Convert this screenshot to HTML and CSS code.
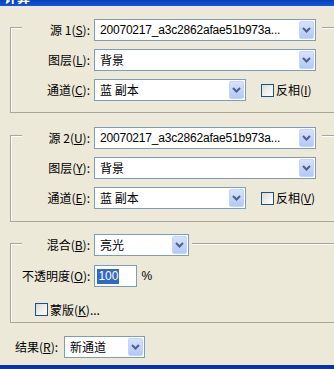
FILE: index.html
```html
<!DOCTYPE html>
<html lang="zh-CN">
<head>
  <meta charset="UTF-8">
  <meta name="viewport" content="width=device-width, initial-scale=1.0">
  <title>计算</title>
  <link rel="stylesheet" href="styles.css">
</head>
<body>
  <div class="titlebar"><span>计算</span></div>

  <div class="dialog">
    <!-- source 1 -->
    <section class="group g1">
      <div class="row head">
        <label class="lbl">源 1(<u>S</u>):</label>
        <div class="select wide"><span class="val latin">20070217_a3c2862afae51b973a...</span><span class="arrow"><svg width="13" height="10" viewBox="0 0 13 10"><polyline points="3,3 6.5,6.5 10,3" fill="none" stroke="#4d6185" stroke-width="2"/></svg></span></div>
      </div>
      <div class="row">
        <label class="lbl">图层(<u>L</u>):</label>
        <div class="select wide"><span class="val">背景</span><span class="arrow"><svg width="13" height="10" viewBox="0 0 13 10"><polyline points="3,3 6.5,6.5 10,3" fill="none" stroke="#4d6185" stroke-width="2"/></svg></span></div>
      </div>
      <div class="row">
        <label class="lbl">通道(<u>C</u>):</label>
        <div class="select mid"><span class="val">蓝 副本</span><span class="arrow"><svg width="13" height="10" viewBox="0 0 13 10"><polyline points="3,3 6.5,6.5 10,3" fill="none" stroke="#4d6185" stroke-width="2"/></svg></span></div>
        <span class="check invert"></span><span class="check-lbl">反相(<u>I</u>)</span>
      </div>
    </section>

    <!-- source 2 -->
    <section class="group g2">
      <div class="row head">
        <label class="lbl">源 2(<u>U</u>):</label>
        <div class="select wide"><span class="val latin">20070217_a3c2862afae51b973a...</span><span class="arrow"><svg width="13" height="10" viewBox="0 0 13 10"><polyline points="3,3 6.5,6.5 10,3" fill="none" stroke="#4d6185" stroke-width="2"/></svg></span></div>
      </div>
      <div class="row">
        <label class="lbl">图层(<u>Y</u>):</label>
        <div class="select wide"><span class="val">背景</span><span class="arrow"><svg width="13" height="10" viewBox="0 0 13 10"><polyline points="3,3 6.5,6.5 10,3" fill="none" stroke="#4d6185" stroke-width="2"/></svg></span></div>
      </div>
      <div class="row">
        <label class="lbl">通道(<u>E</u>):</label>
        <div class="select mid"><span class="val">蓝 副本</span><span class="arrow"><svg width="13" height="10" viewBox="0 0 13 10"><polyline points="3,3 6.5,6.5 10,3" fill="none" stroke="#4d6185" stroke-width="2"/></svg></span></div>
        <span class="check invert"></span><span class="check-lbl">反相(<u>V</u>)</span>
      </div>
    </section>

    <!-- blending -->
    <section class="group g3">
      <div class="row head short">
        <label class="lbl">混合(<u>B</u>):</label>
        <div class="select small"><span class="val">亮光</span><span class="arrow"><svg width="13" height="10" viewBox="0 0 13 10"><polyline points="3,3 6.5,6.5 10,3" fill="none" stroke="#4d6185" stroke-width="2"/></svg></span></div>
      </div>
      <div class="row opacity">
        <label class="lbl">不透明度(<u>O</u>):</label>
        <div class="input"><span class="sel latin">100</span></div>
        <span class="pct latin">%</span>
      </div>
      <div class="row mask">
        <span class="check"></span><span class="check-lbl">蒙版(<u>K</u>)...</span>
      </div>
    </section>

    <div class="row result">
      <label class="lbl">结果(<u>R</u>):</label>
      <div class="select res"><span class="val">新通道</span><span class="arrow"><svg width="13" height="10" viewBox="0 0 13 10"><polyline points="3,3 6.5,6.5 10,3" fill="none" stroke="#4d6185" stroke-width="2"/></svg></span></div>
    </div>
  </div>

  <div class="bottombar"></div>
</body>
</html>
```

FILE: styles.css
```css
* {
  margin: 0;
  padding: 0;
  box-sizing: border-box;
}

html, body {
  width: 334px;
  height: 369px;
  overflow: hidden;
}

body {
  background: #ece9d8;
  font-family: "Noto Sans CJK SC", "Liberation Sans", sans-serif;
  font-size: 12px;
  color: #000;
}

u {
  text-decoration: underline;
  text-underline-offset: 1px;
}

.latin {
  font-family: "Liberation Sans", Arial, sans-serif;
}

.titlebar {
  height: 6px;
  background: linear-gradient(#0a3fb8, #1256dc);
  overflow: hidden;
  padding-left: 4px;
}

.titlebar span {
  display: block;
  margin-top: -11px;
  color: #fff;
  font-weight: bold;
  font-size: 13px;
  line-height: 16px;
}

.dialog {
  padding-left: 10px;
}

.group {
  width: 340px;
  border: 1px solid #a7a69a;
  box-shadow: inset 1px 1px 0 #fff;
  padding: 0 0 12px 11px;
}

.g1 {
  margin-top: 21px;
  padding-bottom: 11px;
}

.g2 {
  margin-top: 22px;
}

.g3 {
  margin-top: 21px;
  padding-bottom: 6px;
}

.row {
  display: flex;
  align-items: center;
  height: 22px;
  margin-top: 8px;
}

.row.head {
  margin-top: -9px;
  width: 300px;
  background: #ece9d8;
}

.g3 .row.head {
  margin-top: -10px;
}

.row.head.short {
  width: 170px;
}

.lbl {
  flex: 0 0 72px;
  text-align: right;
  padding-right: 4px;
  line-height: 16px;
  white-space: nowrap;
}

.select {
  height: 22px;
  border: 1px solid #7f9db9;
  background: #fff;
  display: flex;
  align-items: center;
  justify-content: space-between;
  padding: 1px 1px 1px 5px;
}

.select.wide { width: 222px; }
.select.mid { width: 152px; }
.select.small { width: 95px; }
.select.res { width: 81px; }

.val {
  line-height: 16px;
  white-space: nowrap;
}

.val.latin {
  letter-spacing: -0.2px;
}

.arrow {
  width: 15px;
  height: 18px;
  border: 1px solid #c4d4fb;
  border-radius: 2px;
  background: linear-gradient(#d6e2fe, #b3c8f7);
  display: flex;
  align-items: center;
  justify-content: center;
}

.check {
  width: 13px;
  height: 13px;
  border: 1px solid #1c5180;
  background: linear-gradient(135deg, #dcdcd5, #fff);
  flex: 0 0 13px;
}

.check.invert {
  margin-left: 15px;
}

.check-lbl {
  margin-left: 2px;
  line-height: 16px;
  white-space: nowrap;
}

.row.opacity {
  margin-top: 9px;
}

.input {
  width: 43px;
  height: 22px;
  border: 1px solid #7f9db9;
  background: #fff;
  display: flex;
  align-items: center;
  padding-left: 2px;
}

.sel {
  background: #316ac5;
  color: #fff;
  line-height: 15px;
  padding: 0 1px;
}

.pct {
  margin-left: 4px;
}

.row.mask {
  height: 13px;
  margin-top: 16px;
  padding-left: 13px;
}

.row.result {
  margin-top: 13px;
  padding-left: 5px;
}

.row.result .lbl {
  flex: 0 0 49px;
  text-align: left;
  padding-right: 0;
}

.bottombar {
  margin-top: 7px;
  height: 8px;
  background: linear-gradient(#0a2f9e, #0b3cbd);
}
```
